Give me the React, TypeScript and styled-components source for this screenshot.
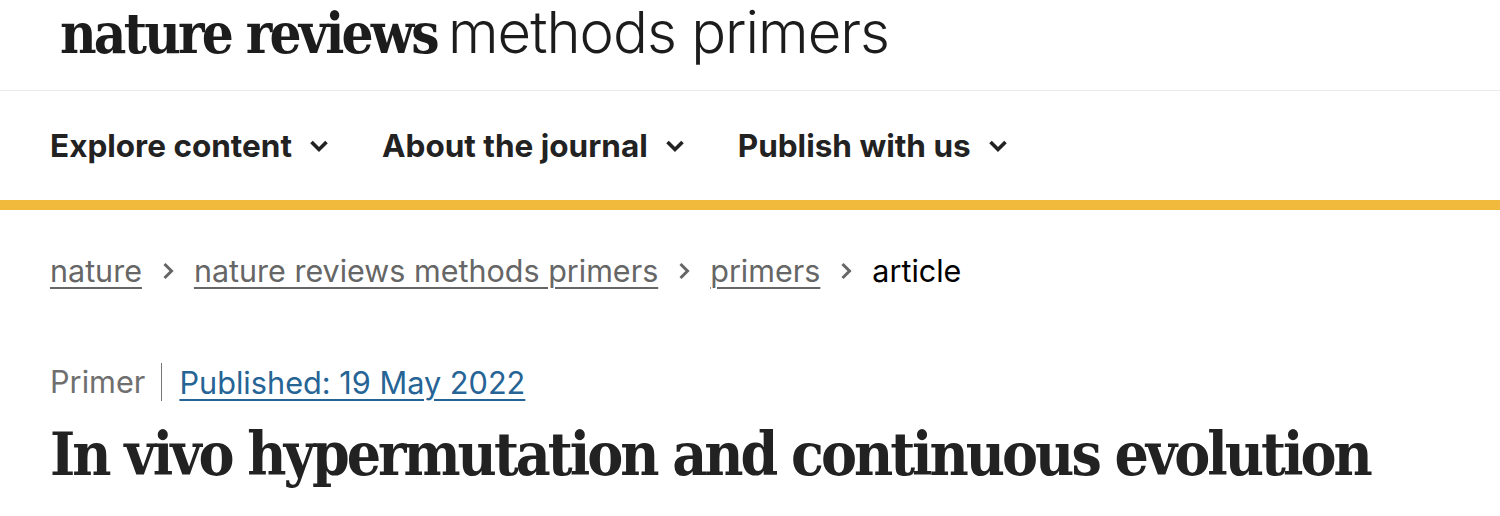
import React from "react";
import styled, { createGlobalStyle } from "styled-components";

const Global = createGlobalStyle`
  html, body { margin: 0; padding: 0; background: #fff; }
  body { font-family: Inter, "Liberation Sans", sans-serif; color: #222; }
  * { box-sizing: border-box; }
`;

const Header = styled.header`
  height: 91px;
  border-bottom: 1px solid #ebebeb;
  display: flex;
  align-items: flex-start;
  padding: 0 0 0 60px;
`;

const Logo = styled.a`
  display: flex;
  align-items: baseline;
  gap: 11px;
  text-decoration: none;
  color: #1c1c1c;
  line-height: 64px;
`;

const LogoBold = styled.span`
  font-family: "DejaVu Serif Condensed", "Liberation Serif", serif;
  font-weight: 700;
  font-size: 56px;
  letter-spacing: -2.8px;
`;

const LogoLight = styled.span`
  font-family: Inter, "Liberation Sans", sans-serif;
  font-weight: 300;
  font-size: 58px;
  letter-spacing: -1px;
`;

const Nav = styled.nav`
  height: 119px;
  border-bottom: 10px solid #f2ba3d;
  display: flex;
  align-items: center;
  padding-left: 50px;
  gap: 53px;
`;

const NavItem = styled.button`
  display: flex;
  align-items: center;
  gap: 17px;
  background: none;
  border: 0;
  padding: 0;
  font-family: Inter, "Liberation Sans", sans-serif;
  font-weight: 700;
  font-size: 31.5px;
  color: #222;
`;

const Main = styled.main`
  padding-left: 50px;
`;

const Crumbs = styled.ol`
  list-style: none;
  margin: 0;
  padding: 42px 0 0;
  display: flex;
  align-items: flex-start;
  gap: 20px;
  font-size: 30.5px;
  height: 150px;
`;

const Crumb = styled.li<{ $current?: boolean }>`
  display: flex;
  align-items: center;
  gap: 20px;
  color: ${(p) => (p.$current ? "#000" : "#666")};
`;

const CrumbLink = styled.a`
  color: #666;
  text-decoration: underline;
  text-underline-offset: 5px;
  text-decoration-thickness: 2px;
`;

const Meta = styled.div`
  display: flex;
  align-items: center;
  font-size: 30.7px;
  height: 44px;
`;

const Type = styled.span`
  color: #6f6f6f;
  padding-right: 16px;
  border-right: 1.5px solid #777;
  line-height: 38px;
`;

const Published = styled.a`
  color: #266496;
  margin-left: 17px;
  text-decoration: underline;
  text-underline-offset: 5px;
  text-decoration-thickness: 2px;
`;

const Title = styled.h1`
  margin: 14px 0 0;
  font-family: "DejaVu Serif Condensed", "Liberation Serif", serif;
  font-weight: 700;
  font-size: 60px;
  letter-spacing: -3px;
  line-height: 1.2;
  color: #222;
`;

const Chevron = () => (
  <svg width="20" height="14" viewBox="0 0 20 14" fill="none">
    <path d="M2.5 3 L10 10.5 L17.5 3" stroke="#222" strokeWidth="3.6" />
  </svg>
);

const Sep = () => (
  <svg width="12" height="18" viewBox="0 0 12 18" fill="none">
    <path d="M2.5 2 L9.5 9 L2.5 16" stroke="#666" strokeWidth="3" />
  </svg>
);

export default function App() {
  return (
    <>
      <Global />
      <Header>
        <Logo href="#">
          <LogoBold>nature reviews</LogoBold>
          <LogoLight>methods primers</LogoLight>
        </Logo>
      </Header>
      <Nav>
        <NavItem>Explore content <Chevron /></NavItem>
        <NavItem>About the journal <Chevron /></NavItem>
        <NavItem>Publish with us <Chevron /></NavItem>
      </Nav>
      <Main>
        <Crumbs>
          <Crumb><CrumbLink href="#">nature</CrumbLink><Sep /></Crumb>
          <Crumb><CrumbLink href="#">nature reviews methods primers</CrumbLink><Sep /></Crumb>
          <Crumb><CrumbLink href="#">primers</CrumbLink><Sep /></Crumb>
          <Crumb $current>article</Crumb>
        </Crumbs>
        <Meta>
          <Type>Primer</Type>
          <Published href="#">Published: 19 May 2022</Published>
        </Meta>
        <Title>In vivo hypermutation and continuous evolution</Title>
      </Main>
    </>
  );
}
